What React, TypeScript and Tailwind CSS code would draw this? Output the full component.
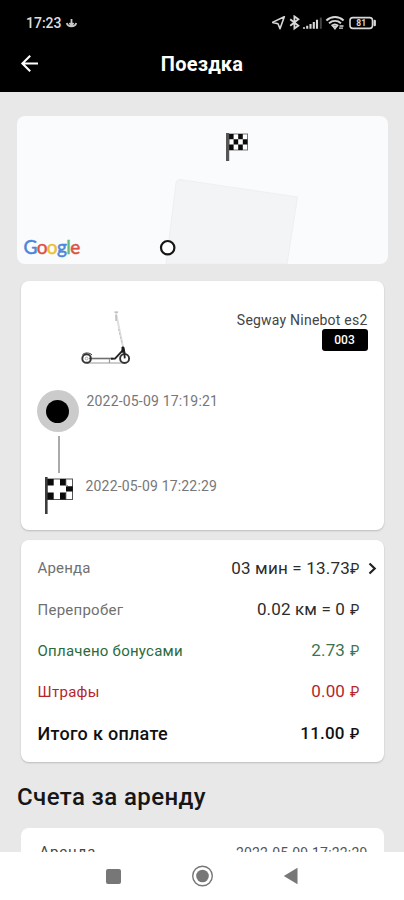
import clsx from 'clsx'

interface BillRow {
  label: string
  value: string
  currencyClass?: string
  labelClass: string
  valueClass: string
  hasArrow?: boolean
}

const rows: BillRow[] = [
  {
    label: 'Аренда',
    value: '03 мин = 13.73',
    labelClass: 'text-[15px] tracking-[0.2px] text-[#707070]',
    valueClass: 'text-[17px] tracking-[0.2px] text-[#2c2c2c]',
    hasArrow: true,
  },
  {
    label: 'Перепробег',
    value: '0.02 км = 0',
    currencyClass: 'ml-[5px]',
    labelClass: 'text-[15px] tracking-[0.25px] text-[#707070]',
    valueClass: 'text-[17px] tracking-[0.15px] text-[#2c2c2c]',
  },
  {
    label: 'Оплачено бонусами',
    value: '2.73',
    currencyClass: 'ml-[5px]',
    labelClass: 'text-[15px] tracking-[0.25px] text-[#2a6b3c]',
    valueClass: 'text-[17px] tracking-[0.15px] text-[#3c7350]',
  },
  {
    label: 'Штрафы',
    value: '0.00',
    currencyClass: 'ml-[5px]',
    labelClass: 'text-[15px] tracking-[0.3px] text-[#b3262e]',
    valueClass: 'text-[17px] tracking-[0.15px] text-[#b3262e]',
  },
  {
    label: 'Итого к оплате',
    value: '11.00',
    currencyClass: 'ml-[5px]',
    labelClass: 'text-[18px] tracking-[0.3px] font-medium text-[#111111]',
    valueClass: 'text-[17px] tracking-[0.2px] font-medium text-[#111111]',
  },
]

function StatusIcons() {
  return (
    <svg width="106" height="16" viewBox="0 0 106 16" fill="none" stroke="#d8d8d8">
      {/* location */}
      <path d="M12.3 1.8 .4 7.4l5.6 1.4 2 4.9z" strokeWidth="1.6" strokeLinejoin="round" />
      {/* bluetooth */}
      <path d="m18.2 4.3 8.2 6.5-4 2.8V1.4l4 2.9-8.2 6.5" strokeWidth="1.8" />
      {/* signal */}
      <path d="M32 12.2v1.6M35.2 10.7v3.1M38.5 9v4.8M41.8 7v6.8M45 4.8v9" strokeWidth="2.1" />
      <path d="M48.8 2.6v11.2" stroke="#444444" strokeWidth="2" />
      {/* wifi */}
      <path d="M54.4 5.4c5-4.4 12.2-4.4 17.2 0M57 8.2c3.6-3 8.4-3 12 0M59.6 10.9c2-1.6 4.6-1.6 6.6 0" strokeWidth="2" />
      <path d="m61.2 11.5 1.8 2.4 1.8-2.4zM67.5 11h4M67 13.2h4" strokeWidth="1.3" />
      {/* battery */}
      <rect x="78" y="2.6" width="22.5" height="10.8" rx="2.8" strokeWidth="1.6" />
      <path d="M102.7 6v4" strokeWidth="2.4" strokeLinecap="round" />
      <text x="89.2" y="11" textAnchor="middle" fontSize="8.5" fontWeight="700" fill="#d8d8d8" stroke="none">81</text>
    </svg>
  )
}

function MapFlag() {
  return (
    <svg width="24" height="30" viewBox="0 0 24 30">
      <rect x="4" y="2" width="18.5" height="16" fill="#fff" stroke="#777777" strokeWidth="1" />
      <path
        d="M4 2h4.6v5.3H4zM13.2 2h4.6v5.3h-4.6zM8.6 7.3h4.6v5.3H8.6zM17.8 7.3h4.6v5.3h-4.6zM4 12.6h4.6V18H4zM13.2 12.6h4.6V18h-4.6z"
        fill="#0b0b0b"
      />
      <rect x="1" y="1" width="3.2" height="28" fill="#555555" />
    </svg>
  )
}

function FinishFlag() {
  return (
    <svg width="30" height="38" viewBox="0 0 30 38">
      <rect x="2" y="2" width="25.5" height="20.5" fill="#fff" stroke="#555555" strokeWidth="1" />
      <path
        d="M2 2h6.7v6.6H2zM15 2h6v6.6h-6zM21 9.3h6.8v5.2H21zM2 15.6h6.7v6.9H2zM15 15.6h6v6.9h-6z"
        fill="#0b0b0b"
      />
      <path d="M21 2.5v6.8M21 15v7M21 9.3l2-1" stroke="#777777" strokeWidth=".8" />
      <rect x="0" y="0" width="2.6" height="37" fill="#3d3d3d" />
    </svg>
  )
}

function Scooter() {
  return (
    <svg width="52" height="56" viewBox="0 0 52 56" fill="none">
      {/* stem and handle */}
      <path d="m35 4 7 34" stroke="#dedede" strokeWidth="2" />
      <path d="M33.5 3.2h3.6M35 6v6" stroke="#b0b0b0" strokeWidth="1.2" />
      <path d="m37.5 20 3.5 14" stroke="#c2c2c2" strokeWidth="1" strokeDasharray="2 2" />
      {/* deck */}
      <path d="M8 49.5h24" stroke="#6f6f6f" strokeWidth="1.6" />
      <path d="M6 54h38M28.5 50v4" stroke="#9a9a9a" strokeWidth="1.2" />
      <path d="m30 49.8 4-.2 8.5-9" stroke="#252525" strokeWidth="2" />
      <path d="M41 43.5v-5.5h1.8l1.2 6" fill="#1a1a1a" stroke="#1a1a1a" strokeWidth="1" />
      {/* wheels */}
      <circle cx="5.6" cy="49.5" r="4.3" stroke="#333333" strokeWidth="1.9" />
      <path d="M1.5 45.5c2.4-2 7-2.2 9.5.5" stroke="#333333" />
      <circle cx="43.6" cy="49.5" r="4.5" stroke="#333333" strokeWidth="1.9" />
      <path d="m43.2 43 .6 6.3" stroke="#222222" strokeWidth="1.8" />
      <circle cx="5.6" cy="49.5" r="1.4" stroke="#aaaaaa" />
    </svg>
  )
}

function Header() {
  return (
    <header className="h-[92px] shrink-0 bg-black">
      <div className="flex h-[46px] items-center justify-between px-[26px]">
        <div className="flex items-center gap-1 text-[14px] font-medium text-[#dedede]">
          <span>17:23</span>
          <svg width="11" height="10" viewBox="0 0 11 10" fill="none" stroke="#c8c8c8" strokeWidth="1.8">
            <path d="M5.5 1v8M3.4 5l2.1 2.5L7.6 5M.8 5c1 4.5 8.400 4.500 9.400 0" />
          </svg>
        </div>
        <StatusIcons />
      </div>
      <div className="grid h-[36px] grid-cols-[1fr_auto_1fr] items-center px-5">
        <svg width="20" height="20" viewBox="0 0 20 20" fill="none" stroke="#ffffff" strokeWidth="2.1">
          <path d="M18 9.5H2.6M10.2 1.7 2.4 9.5l7.8 7.8" />
        </svg>
        <h1 className="text-[20px] font-bold tracking-[0.2px] text-white">Поездка</h1>
      </div>
    </header>
  )
}

function MapCard() {
  return (
    <section className="relative mx-auto mt-6 h-[148px] w-[371px] shrink-0 overflow-hidden rounded-lg bg-[#f9fbfc]">
      <svg className="block" width="371" height="148" viewBox="0 0 371 148">
        <path d="M149 148 159 67q.6-4 5-3.3L280.500 81 270 148z" fill="#f3f4f5" stroke="#edeff0" strokeWidth="1" />
        <circle cx="150.7" cy="131.7" r="6.7" fill="#fff" stroke="#161616" strokeWidth="2.2" />
      </svg>
      <div className="absolute left-[208px] top-4">
        <MapFlag />
      </div>
      <div className="absolute bottom-[6px] left-[7px] font-[Lato] text-[19px] leading-[23px] tracking-[-0.6px] [-webkit-text-stroke:0.5px_currentColor]">
        <span className="text-[#4a86dc]">G</span>
        <span className="text-[#dc5146]">o</span>
        <span className="text-[#edc02f]">o</span>
        <span className="text-[#4a86dc]">g</span>
        <span className="text-[#63b57a]">l</span>
        <span className="text-[#dc5146]">e</span>
      </div>
    </section>
  )
}

function RideCard() {
  return (
    <section className="mx-auto mt-[17px] h-[249px] w-[363px] shrink-0 rounded-lg bg-white px-4 pt-7 shadow-[0_1px_2px_rgba(0,0,0,0.2)]">
      <div className="flex h-[81px] justify-between">
        <div className="pl-[44px]">
          <Scooter />
        </div>
        <div className="flex flex-col items-end pt-[3px]">
          <span className="text-[14px] leading-[17px] tracking-[0.22px] text-[#444444]">Segway Ninebot es2</span>
          <span className="flex h-[22px] w-[46px] items-center justify-center rounded-[3px] bg-black text-[12px] font-medium text-white">
            003
          </span>
        </div>
      </div>
      <div className="flex">
        <div className="flex w-[42px] flex-col items-center">
          <div className="flex size-[42px] items-center justify-center rounded-full bg-[#cbcbcb]">
            <div className="size-[23px] rounded-full bg-black" />
          </div>
          <div className="mt-1 h-[37px] w-[2px] translate-x-px bg-[#aaaaaa]" />
          <div className="mt-1 pl-1">
            <FinishFlag />
          </div>
        </div>
        <div className="flex flex-col pl-2 text-[14px] leading-5 tracking-[0.18px] text-[#777777]">
          <span className="mt-[1px]">2022-05-09 17:19:21</span>
          <span className="-ml-px mt-[65px]">2022-05-09 17:22:29</span>
        </div>
      </div>
    </section>
  )
}

function BillCard() {
  return (
    <section className="mx-auto mt-[10px] h-[222px] w-[363px] shrink-0 rounded-lg bg-white pl-[17px] pt-2 shadow-[0_1px_2px_rgba(0,0,0,0.2)]">
      {rows.map((row) => (
        <div key={row.label} className="flex h-[41.2px] items-center">
          <span className={clsx('grow whitespace-nowrap', row.labelClass)}>{row.label}</span>
          <span className={clsx('flex items-baseline whitespace-nowrap', row.valueClass)}>
            {row.value}
            <span className={clsx('text-[14px]', row.currencyClass)}>₽</span>
          </span>
          <span className="flex w-[24px] justify-end pr-[7px]">
            {row.hasArrow && (
              <svg width="9" height="14" viewBox="0 0 9 14" fill="none" stroke="#222222" strokeWidth="2.2">
                <path d="m1.500 1.500 5.200 5-5.200 5" />
              </svg>
            )}
          </span>
        </div>
      ))}
    </section>
  )
}

function NavBar() {
  return (
    <nav className="flex h-[48px] shrink-0 items-center justify-center gap-[70px] bg-white">
      <div className="size-[15px] rounded-[2px] bg-[#777777]" />
      <svg width="22" height="22" viewBox="0 0 22 22" fill="none">
        <circle cx="11.5" cy="11" r="9.8" stroke="#777777" strokeWidth="1.4" />
        <circle cx="11.5" cy="11" r="6.3" fill="#777777" />
      </svg>
      <svg width="15" height="18" viewBox="0 0 15 18">
        <path d="M14.500 .8v16.400L.8 9z" fill="#777777" />
      </svg>
    </nav>
  )
}

export default function App() {
  return (
    <div className="flex h-[900px] w-[404px] flex-col overflow-hidden bg-[#e8e8e8] font-[Roboto,sans-serif]">
      <Header />
      <main className="flex h-[760px] flex-col overflow-hidden">
        <MapCard />
        <RideCard />
        <BillCard />
        <h2 className="mt-[19px] shrink-0 pl-[17px] text-[24px] font-medium leading-8 tracking-[0.4px] text-[#161616]">
          Счета за аренду
        </h2>
        <section className="mx-auto mt-[15px] flex h-[100px] w-[363px] shrink-0 justify-between rounded-lg bg-white px-4 pt-[13px]">
          <span className="pl-[3px] text-[15px] leading-[22px] tracking-[0.8px] text-[#444444]">Аренда</span>
          <span className="text-[14px] leading-6 tracking-[0.18px] text-[#555555]">2022-05-09 17:22:29</span>
        </section>
      </main>
      <NavBar />
    </div>
  )
}
